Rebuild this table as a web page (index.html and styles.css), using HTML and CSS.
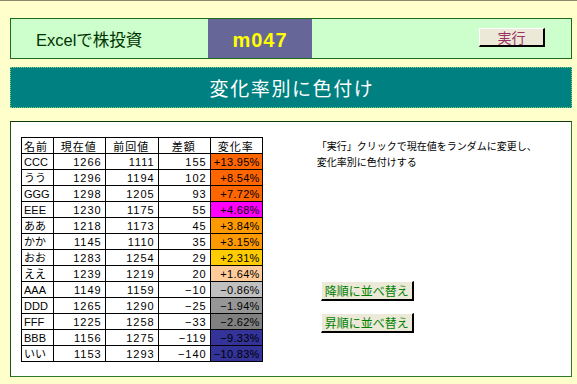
FILE: index.html
```
<!DOCTYPE html>
<html lang="ja">
<head>
<meta charset="utf-8">
<title>Excelで株投資 m047</title>
<link rel="stylesheet" href="styles.css">
</head>
<body>
<div class="page">
  <header class="head">
    <div class="brand">Excelで株投資</div>
    <div class="code">m047</div>
    <div class="head-fill">
      <button class="btn btn-run"><span>実行</span></button>
    </div>
  </header>
  <div class="title">変化率別に色付け</div>
  <section class="panel">
    <table class="grid">
      <thead>
        <tr><th class="c-name">名前</th><th class="c-num">現在値</th><th class="c-num2">前回値</th><th class="c-num">差額</th><th class="c-num">変化率</th></tr>
      </thead>
      <tbody>
        <tr><td class="nm">CCC</td><td>1266</td><td>1111</td><td>155</td><td class="rt c-o1">+13.95%</td></tr>
        <tr><td class="nm">うう</td><td>1296</td><td>1194</td><td>102</td><td class="rt c-o1">+8.54%</td></tr>
        <tr><td class="nm">GGG</td><td>1298</td><td>1205</td><td>93</td><td class="rt c-o1">+7.72%</td></tr>
        <tr><td class="nm">EEE</td><td>1230</td><td>1175</td><td>55</td><td class="rt c-mg">+4.68%</td></tr>
        <tr><td class="nm">ああ</td><td>1218</td><td>1173</td><td>45</td><td class="rt c-o2">+3.84%</td></tr>
        <tr><td class="nm">かか</td><td>1145</td><td>1110</td><td>35</td><td class="rt c-o2">+3.15%</td></tr>
        <tr><td class="nm">おお</td><td>1283</td><td>1254</td><td>29</td><td class="rt c-y">+2.31%</td></tr>
        <tr><td class="nm">ええ</td><td>1239</td><td>1219</td><td>20</td><td class="rt c-pe">+1.64%</td></tr>
        <tr><td class="nm">AAA</td><td>1149</td><td>1159</td><td>&minus;10</td><td class="rt c-g1">&minus;0.86%</td></tr>
        <tr><td class="nm">DDD</td><td>1265</td><td>1290</td><td>&minus;25</td><td class="rt c-g2">&minus;1.94%</td></tr>
        <tr><td class="nm">FFF</td><td>1225</td><td>1258</td><td>&minus;33</td><td class="rt c-g3">&minus;2.62%</td></tr>
        <tr><td class="nm">BBB</td><td>1156</td><td>1275</td><td>&minus;119</td><td class="rt c-b">&minus;9.33%</td></tr>
        <tr><td class="nm">いい</td><td>1153</td><td>1293</td><td>&minus;140</td><td class="rt c-b">&minus;10.83%</td></tr>
      </tbody>
    </table>
    <div class="side">
      <p class="note">「実行」クリックで現在値をランダムに変更し、<br>変化率別に色付けする</p>
      <button class="btn btn-sort first"><span>降順に並べ替え</span></button>
      <button class="btn btn-sort"><span>昇順に並べ替え</span></button>
    </div>
  </section>
</div>
</body>
</html>
```
FILE: styles.css
```
* { box-sizing: border-box; }
html, body { margin: 0; padding: 0; }
body {
  background: #ffffcc;
  border-top: 1px solid #8a8a6a;
  font-family: "Noto Sans CJK JP", sans-serif;
  width: 577px;
  height: 384px;
  overflow: hidden;
}
.page {
  padding: 17px 5px 0 10px;
}
.head {
  display: flex;
  height: 41px;
  background: #ccffcc;
  border: 1px solid #1e6b1e;
}
.brand {
  width: 197px;
  padding-left: 25px;
  display: flex;
  align-items: center;
  font-size: 16.5px;
  color: #003300;
  font-family: "Liberation Sans", "Noto Sans CJK JP", sans-serif;
}
.code {
  width: 104px;
  background: #666699;
  color: #ffff00;
  font-family: "Liberation Sans", sans-serif;
  font-weight: bold;
  font-size: 20px;
  letter-spacing: 1px;
  display: flex;
  align-items: center;
  justify-content: center;
  padding-top: 3px;
}
.head-fill {
  flex: 1;
  padding: 9px 0 0 167px;
}
.btn {
  display: flex;
  align-items: center;
  justify-content: center;
  margin: 0;
  padding: 0;
  background: #ece9d8;
  border-style: solid;
  border-color: #ffffff #000000 #000000 #ffffff;
  border-width: 1px 2px 2px 1px;
  font-family: "Noto Sans CJK JP", sans-serif;
}
.btn span {
  display: block;
  line-height: 14px;
}
.btn-run {
  width: 66px;
  height: 19px;
  color: #993366;
  font-size: 14px;
}
.title {
  margin-top: 8px;
  height: 41px;
  background: #008080;
  border: 1px dotted #7fd07f;
  color: #ffffff;
  font-size: 19px;
  letter-spacing: 1.6px;
  display: flex;
  align-items: center;
  justify-content: center;
  padding-left: 2px;
}
.panel {
  margin-top: 13px;
  height: 256px;
  background: #ffffff;
  border: 1px solid #2a7a2a;
  border-top-color: #123812;
  border-left-color: #1c501c;
  display: flex;
  align-items: flex-start;
  padding: 15px 0 0 10px;
}
.grid {
  border-collapse: collapse;
  font-family: "Liberation Sans", "Noto Sans CJK JP", sans-serif;
  font-size: 11px;
  color: #000000;
}
.grid th, .grid td {
  border: 1px solid #000000;
  height: 16px;
  padding: 0 3px 0 2px;
  line-height: 14px;
  white-space: nowrap;
}
.grid th {
  font-weight: normal;
  font-family: "Noto Sans CJK JP", sans-serif;
  letter-spacing: 1px;
  text-align: center;
}
.grid th.c-name { width: 31px; text-align: left; }
.grid th.c-num { width: 52px; }
.grid th.c-num2 { width: 53px; }
.grid td {
  text-align: right;
  letter-spacing: 1px;
}
.grid td.nm {
  text-align: left;
  font-family: "Liberation Sans", "Noto Sans CJK JP", sans-serif;
  letter-spacing: 0;
}
.grid td.rt { padding-right: 2px; letter-spacing: 0.3px; }
.c-o1 { background: #ff6600; }
.c-mg { background: #ff00ff; }
.c-o2 { background: #ff9900; }
.c-y { background: #ffcc00; }
.c-pe { background: #ffcc99; }
.c-g1 { background: #c0c0c0; }
.c-g2 { background: #969696; }
.c-g3 { background: #808080; }
.c-b { background: #333399; }
.side {
  margin-left: 54px;
  display: flex;
  flex-direction: column;
  align-items: flex-start;
}
.note {
  margin: 1px 0 0 0;
  font-size: 10px;
  line-height: 16px;
  color: #000000;
}
.btn-sort {
  width: 93px;
  height: 20px;
  margin-left: 4px;
  color: #008000;
  font-size: 12px;
  margin-top: 12px;
}
.btn-sort.first { margin-top: 111px; }
```
